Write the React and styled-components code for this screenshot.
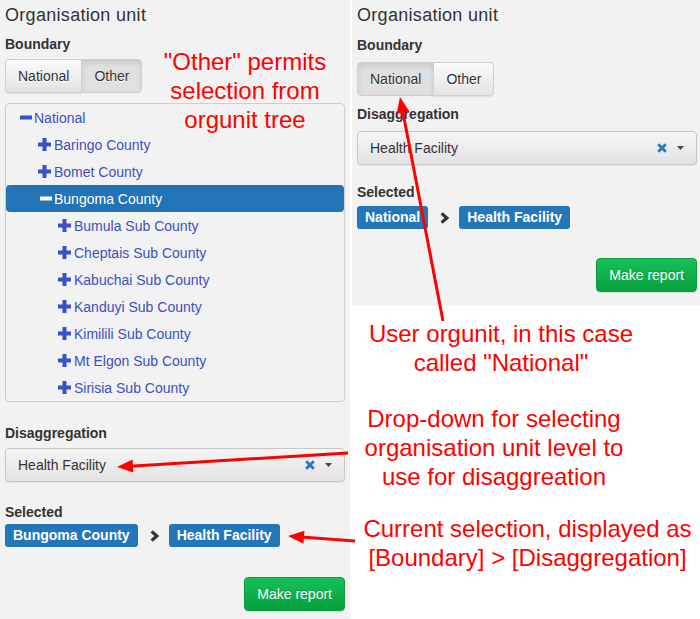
import React from 'react';
import styled, { createGlobalStyle } from 'styled-components';

const Global = createGlobalStyle`
  html, body { margin: 0; padding: 0; background: #fff; }
  body { font-family: "Liberation Sans", Helvetica, Arial, sans-serif; color: #333; }
  * { box-sizing: border-box; }
`;

const Page = styled.div`
  position: relative;
  display: flex;
  align-items: flex-start;
  gap: 2px;
  width: 700px;
  height: 619px;
  overflow: hidden;
  background: #fff;
`;

const Panel = styled.section`
  position: relative;
  display: flex;
  flex-direction: column;
  flex: none;
  width: ${p => p.$width}px;
  height: ${p => p.$height}px;
  padding: 5px ${p => p.$padRight}px 0 5px;
  background: #f2f2f2;
`;

const Column = styled.div`
  display: flex;
  flex-direction: column;
  flex: none;
  width: 348px;
`;

const Heading = styled.h4`
  margin: 0;
  font-size: 18px;
  line-height: 20px;
  font-weight: 400;
  letter-spacing: 0.3px;
  color: #333;
`;

const Label = styled.div`
  margin-top: ${p => p.$mt}px;
  font-size: 14px;
  line-height: 20px;
  font-weight: 700;
  color: #333;
`;

const ButtonGroup = styled.div`
  display: flex;
  align-self: flex-start;
  margin-top: ${p => p.$mt}px;
`;

const ToggleButton = styled.button`
  font-family: inherit;
  font-size: 14px;
  line-height: 20px;
  padding: 6px 12px;
  color: #333;
  border: 1px solid #cfcfcf;
  text-shadow: 0 1px 0 #fff;
  cursor: pointer;
  background: ${p => (p.$active ? '#e0e0e0' : 'linear-gradient(to bottom, #fbfbfb 0%, #e3e3e3 100%)')};
  box-shadow: ${p => (p.$active ? 'inset 0 3px 5px rgba(0,0,0,.1)' : '0 1px 1px rgba(0,0,0,.075)')};
  border-radius: 0;
  &:first-child { border-radius: 4px 0 0 4px; }
  &:last-child { border-radius: 0 4px 4px 0; margin-left: -1px; }
`;

const Tree = styled.ul`
  list-style: none;
  margin: 10px 0 0;
  padding: 0;
  border: 1px solid #cdcdcd;
  border-radius: 4px;
  background: #f2f2f2;
`;

const TreeRow = styled.li`
  display: flex;
  align-items: center;
  height: 27px;
  padding-left: ${p => 12 + p.$level * 20}px;
  font-size: 14px;
  color: ${p => (p.$selected ? '#fff' : '#3b50c4')};
  background: ${p => (p.$selected ? '#2373b7' : 'transparent')};
  border-radius: 4px;
  white-space: nowrap;
`;

const ToggleIcon = styled.svg`
  flex: none;
  width: 16px;
  height: 13px;
  fill: currentColor;
`;

const Select = styled.div`
  display: flex;
  align-items: center;
  height: 34px;
  margin-top: ${p => p.$mt}px;
  padding: 0 12px;
  border: 1px solid #c6c6c6;
  border-radius: 4px;
  background: linear-gradient(to bottom, #f6f6f6 0%, #e2e2e2 100%);
  box-shadow: 0 1px 1px rgba(0,0,0,.06);
  font-size: 14px;
  color: #333;
`;

const SelectValue = styled.span`
  flex: 1;
`;

const ClearIcon = styled.svg`
  width: 10px;
  height: 10px;
  margin-right: 10px;
`;

const CaretIcon = styled.svg`
  width: 7px;
  height: 4px;
`;

const Selection = styled.div`
  display: flex;
  align-items: center;
  margin-top: ${p => p.$mt}px;
`;

const Badge = styled.span`
  display: inline-block;
  height: 23px;
  line-height: 23px;
  padding: 0 8px;
  border-radius: 3px;
  background: #2476b9;
  color: #fff;
  font-size: 14px;
  font-weight: 700;
  white-space: nowrap;
`;

const Chevron = styled.svg`
  width: 9px;
  height: 12px;
  margin: 0 10px 0 12px;
`;

const Actions = styled.div`
  display: flex;
  justify-content: flex-end;
  margin-top: ${p => p.$mt}px;
`;

const ReportButton = styled.button`
  font-family: inherit;
  font-size: 14px;
  line-height: 20px;
  padding: 6px 12px;
  color: #fff;
  border: 1px solid #0b9a3d;
  border-radius: 4px;
  background: linear-gradient(to bottom, #17c158 0%, #079f3f 100%);
  text-shadow: 0 -1px 0 rgba(0,0,0,.15);
  box-shadow: 0 1px 1px rgba(0,0,0,.1);
  cursor: pointer;
`;

const Callout = styled.div`
  position: absolute;
  top: 47px;
  left: 140px;
  width: 210px;
  text-align: center;
  font-size: 24px;
  line-height: 29px;
  color: #ff0000;
  white-space: nowrap;
  z-index: 1;
`;

const Note = styled.p`
  margin: ${p => p.$mt}px 0 0;
  padding: 0 ${p => p.$padRight || 0}px 0 ${p => p.$padLeft || 0}px;
  text-align: center;
  font-size: 24px;
  line-height: 29px;
  color: #ff0000;
  white-space: nowrap;
`;

const ArrowLayer = styled.svg`
  position: absolute;
  left: 0;
  top: 0;
  width: 700px;
  height: 619px;
  pointer-events: none;
  z-index: 2;
`;

function Arrow({ x1, y1, x2, y2, head = 16, spread = 13 }) {
  const dx = x2 - x1;
  const dy = y2 - y1;
  const len = Math.hypot(dx, dy);
  const ux = dx / len;
  const uy = dy / len;
  const bx = x2 - ux * head;
  const by = y2 - uy * head;
  const px = (-uy * spread) / 2;
  const py = (ux * spread) / 2;
  return (
    <g>
      <line x1={x1} y1={y1} x2={bx + ux * 3} y2={by + uy * 3} stroke="#ff0000" strokeWidth="3" />
      <polygon points={`${x2},${y2} ${bx + px},${by + py} ${bx - px},${by - py}`} fill="#ff0000" />
    </g>
  );
}

function Toggle({ open }) {
  return (
    <ToggleIcon viewBox="0 0 16 13">
      {open ? (
        <rect x="2" y="4.5" width="12" height="4" />
      ) : (
        <>
          <rect x="4.5" y="0" width="4" height="13" />
          <rect x="0" y="4.5" width="13" height="4" />
        </>
      )}
    </ToggleIcon>
  );
}

const treeItems = [
  { name: 'National', level: 0, open: true },
  { name: 'Baringo County', level: 1 },
  { name: 'Bomet County', level: 1 },
  { name: 'Bungoma County', level: 1, open: true, selected: true },
  { name: 'Bumula Sub County', level: 2 },
  { name: 'Cheptais Sub County', level: 2 },
  { name: 'Kabuchai Sub County', level: 2 },
  { name: 'Kanduyi Sub County', level: 2 },
  { name: 'Kimilili Sub County', level: 2 },
  { name: 'Mt Elgon Sub County', level: 2 },
  { name: 'Sirisia Sub County', level: 2 },
];

function DisaggregationSelect({ mt }) {
  return (
    <Select $mt={mt}>
      <SelectValue>Health Facility</SelectValue>
      <ClearIcon viewBox="0 0 10 10">
        <path d="M1.2 1.2 L8.8 8.8 M8.8 1.2 L1.2 8.8" stroke="#2a77c0" strokeWidth="2.8" />
      </ClearIcon>
      <CaretIcon viewBox="0 0 7 4">
        <polygon points="0,0 7,0 3.5,4" fill="#444" />
      </CaretIcon>
    </Select>
  );
}

function SelectedPath({ mt, boundary }) {
  return (
    <Selection $mt={mt}>
      <Badge>{boundary}</Badge>
      <Chevron viewBox="0 0 9 12">
        <polyline points="1.6,1.4 6.8,6 1.6,10.6" fill="none" stroke="#333" strokeWidth="3.2" />
      </Chevron>
      <Badge>Health Facility</Badge>
    </Selection>
  );
}

export default function App() {
  return (
    <>
      <Global />
      <Page>
        <Panel $width={350} $height={619} $padRight={5}>
          <Heading>Organisation unit</Heading>
          <Label $mt={9}>Boundary</Label>
          <ButtonGroup $mt={5}>
            <ToggleButton>National</ToggleButton>
            <ToggleButton $active>Other</ToggleButton>
          </ButtonGroup>
          <Tree>
            {treeItems.map(item => (
              <TreeRow key={item.name} $level={item.level} $selected={item.selected}>
                <Toggle open={item.open} />
                {item.name}
              </TreeRow>
            ))}
          </Tree>
          <Label $mt={21}>Disaggregation</Label>
          <DisaggregationSelect mt={5} />
          <Label $mt={20}>Selected</Label>
          <SelectedPath mt={2} boundary="Bungoma County" />
          <Actions $mt={30}>
            <ReportButton>Make report</ReportButton>
          </Actions>
          <Callout>
            "Other" permits
            <br />
            selection from
            <br />
            orgunit tree
          </Callout>
        </Panel>
        <Column>
          <Panel $width={348} $height={306} $padRight={3}>
            <Heading>Organisation unit</Heading>
            <Label $mt={10}>Boundary</Label>
            <ButtonGroup $mt={7}>
              <ToggleButton $active>National</ToggleButton>
              <ToggleButton>Other</ToggleButton>
            </ButtonGroup>
            <Label $mt={8}>Disaggregation</Label>
            <DisaggregationSelect mt={7} />
            <Label $mt={17}>Selected</Label>
            <SelectedPath mt={4} boundary="National" />
            <Actions $mt={29}>
              <ReportButton>Make report</ReportButton>
            </Actions>
          </Panel>
          <Note $mt={13} $padRight={50}>
            User orgunit, in this case
            <br />
            called "National"
          </Note>
          <Note $mt={27} $padRight={64}>
            Drop-down for selecting
            <br />
            organisation unit level to
            <br />
            use for disaggreation
          </Note>
          <Note $mt={23} $padLeft={3}>
            Current selection, displayed as
            <br />
            [Boundary] &gt; [Disaggregation]
          </Note>
        </Column>
        <ArrowLayer viewBox="0 0 700 619">
          <Arrow x1={443} y1={321} x2={400} y2={97} />
          <Arrow x1={348} y1={453} x2={117} y2={467} />
          <Arrow x1={355} y1={541} x2={288} y2={536} />
        </ArrowLayer>
      </Page>
    </>
  );
}
